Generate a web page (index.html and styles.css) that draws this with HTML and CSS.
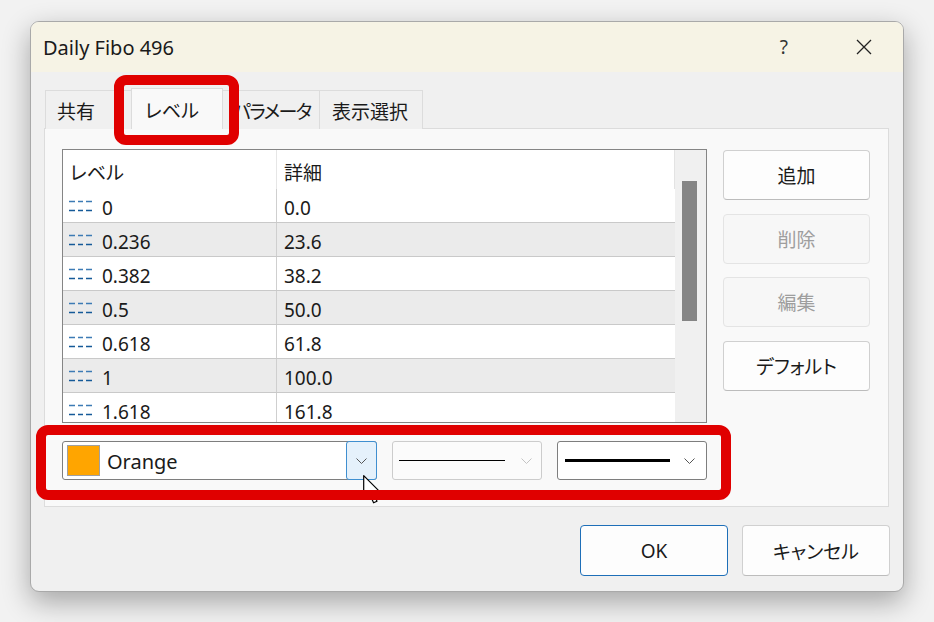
FILE: index.html
```html
<!DOCTYPE html>
<html lang="ja">
<head>
  <meta charset="UTF-8">
  <title>Daily Fibo 496</title>
  <link rel="stylesheet" href="styles.css">
</head>
<body>
  <div class="window">
    <div class="titlebar">
      <span class="title">Daily Fibo 496</span>
      <span class="help">?</span>
      <svg class="close" width="16" height="16" viewBox="0 0 16 16">
        <path d="M1 1 L15 15 M15 1 L1 15" stroke="#222" stroke-width="1.3" fill="none"/>
      </svg>
    </div>

    <div class="content">
      <div class="tabs">
        <div class="tab">共有</div>
        <div class="tab active">レベル</div>
        <div class="tab tight">パラメータ</div>
        <div class="tab">表示選択</div>
      </div>

      <div class="panel">
        <div class="panel-top">
          <div class="levels">
            <div class="grid">
              <div class="row head">
                <div class="cell c1">レベル</div>
                <div class="cell c2">詳細</div>
              </div>
              <div class="row">
                <div class="cell c1"><svg class="lvl" width="23" height="12"><use href="#dash"/></svg>0</div>
                <div class="cell c2">0.0</div>
              </div>
              <div class="row alt">
                <div class="cell c1"><svg class="lvl" width="23" height="12"><use href="#dash"/></svg>0.236</div>
                <div class="cell c2">23.6</div>
              </div>
              <div class="row">
                <div class="cell c1"><svg class="lvl" width="23" height="12"><use href="#dash"/></svg>0.382</div>
                <div class="cell c2">38.2</div>
              </div>
              <div class="row alt">
                <div class="cell c1"><svg class="lvl" width="23" height="12"><use href="#dash"/></svg>0.5</div>
                <div class="cell c2">50.0</div>
              </div>
              <div class="row">
                <div class="cell c1"><svg class="lvl" width="23" height="12"><use href="#dash"/></svg>0.618</div>
                <div class="cell c2">61.8</div>
              </div>
              <div class="row alt">
                <div class="cell c1"><svg class="lvl" width="23" height="12"><use href="#dash"/></svg>1</div>
                <div class="cell c2">100.0</div>
              </div>
              <div class="row">
                <div class="cell c1"><svg class="lvl" width="23" height="12"><use href="#dash"/></svg>1.618</div>
                <div class="cell c2">161.8</div>
              </div>
            </div>
            <div class="scrollbar"><div class="thumb"></div></div>
          </div>

          <div class="side-btns">
            <button class="btn">追加</button>
            <button class="btn" disabled>削除</button>
            <button class="btn" disabled>編集</button>
            <button class="btn">デフォルト</button>
          </div>
        </div>

        <div class="combos">
          <div class="combo color-combo">
            <span class="swatch"></span>
            <span class="combo-text">Orange</span>
            <span class="drop hover">
              <svg width="11" height="6" viewBox="0 0 11 6"><path d="M0.5 0.5 L5.5 5.5 L10.5 0.5" stroke="#555" fill="none"/></svg>
            </span>
          </div>
          <div class="combo style-combo disabled">
            <span class="line thin"></span>
            <span class="drop">
              <svg width="11" height="6" viewBox="0 0 11 6"><path d="M0.5 0.5 L5.5 5.5 L10.5 0.5" stroke="#c4c4c4" fill="none"/></svg>
            </span>
          </div>
          <div class="combo width-combo">
            <span class="line thick"></span>
            <span class="drop">
              <svg width="11" height="6" viewBox="0 0 11 6"><path d="M0.5 0.5 L5.5 5.5 L10.5 0.5" stroke="#555" fill="none"/></svg>
            </span>
          </div>
        </div>
      </div>

      <div class="footer">
        <button class="btn default">OK</button>
        <button class="btn">キャンセル</button>
      </div>
    </div>

    <!-- mouse pointer over the colour drop-down -->
    <svg class="cursor" width="19" height="30" viewBox="0 0 19 30">
      <path d="M0.7 0.7 L0.7 24 L6.3 18.6 L10.6 27.8 L14 26.2 L9.8 17.2 L17.2 17.2 Z" fill="#fff" stroke="#000" stroke-width="1.2" stroke-linejoin="round"/>
    </svg>

    <!-- annotation marks -->
    <div class="mark mark-tab"></div>
    <div class="mark mark-combo"></div>
  </div>

  <svg width="0" height="0" style="position:absolute">
    <defs>
      <g id="dash">
        <path d="M0 1.5 H6 M9 1.5 H14 M17 1.5 H23" stroke="#3d7bb5" stroke-width="1.3"/>
        <path d="M0 10.5 H6 M9 10.5 H14 M17 10.5 H23" stroke="#155a98" stroke-width="1.6"/>
      </g>
    </defs>
  </svg>
</body>
</html>
```

FILE: styles.css
```css
* {
  margin: 0;
  padding: 0;
  box-sizing: border-box;
}

body {
  font-family: "Noto Sans", "Noto Sans CJK JP", sans-serif;
  font-feature-settings: "palt";
  background-color: #f2f2f2;
  color: #1a1a1a;
  width: 934px;
  height: 622px;
  overflow: hidden;
}

/* Window */
.window {
  position: relative;
  margin: 21px 0 0 30px;
  width: 874px;
  height: 571px;
  border: 1px solid #a9a9a9;
  border-radius: 9px;
  background: #f0f0f0;
  box-shadow: 0 10px 28px rgba(0, 0, 0, 0.32);
  overflow: hidden;
}

.titlebar {
  height: 50px;
  background: #f6f3e5;
  display: flex;
  align-items: center;
  padding: 0 31px 0 12px;
}

.title {
  font-size: 20px;
  flex: 1;
}

.help {
  font-size: 19px;
  color: #333;
  margin-right: 68px;
}

.close {
  display: block;
}

/* Content */
.content {
  padding: 17px 14px 0 13px;
}

.tabs {
  display: flex;
  align-items: flex-end;
  height: 40px;
  padding-left: 1px;
  position: relative;
  z-index: 1;
  margin-bottom: -1px;
}

.tab {
  height: 39px;
  border: 1px solid #dcdcdc;
  border-bottom: none;
  background: #f0f0f0;
  font-size: 19px;
  white-space: nowrap;
  padding: 6px 0 0 11px;
  margin-right: -1px;
}

.tab:nth-child(1) { width: 87px; }
.tab:nth-child(2) { width: 92px; }
.tab:nth-child(3) { width: 98px; padding-left: 10px; }
.tab:nth-child(4) { width: 104px; padding-left: 12px; }

.tab.tight {
  letter-spacing: -1.6px;
}

.tab.active {
  height: 41px;
  background: #f9f9f9;
  padding-left: 13px;
  padding-top: 7px;
}

.panel {
  border: 1px solid #dcdcdc;
  background: #f9f9f9;
  padding: 20px 17px 26px 17px;
}

.panel-top {
  display: flex;
  gap: 16px;
}

/* Level list */
.levels {
  width: 645px;
  height: 274px;
  border: 1px solid #858585;
  background: #fff;
  display: flex;
}

.grid {
  flex: 1;
  overflow: hidden;
}

.row {
  display: flex;
  height: 34px;
  border-bottom: 1px solid #c9c9c9;
  font-size: 19px;
}

.row.head {
  height: 39px;
  border-bottom: none;
  border-right: 1px solid #e3e3e3;
}

.row.alt {
  background: #ebebeb;
}

.cell {
  display: flex;
  align-items: center;
  padding-top: 5px;
}

.c1 {
  width: 214px;
  border-right: 1px solid #cfcfcf;
  padding-left: 6px;
}

.head .c1 {
  padding-left: 7px;
  border-right-color: #e6e6e6;
}

.c2 {
  flex: 1;
  padding-left: 7px;
}

.lvl {
  margin-right: 10px;
  margin-top: -5px;
  flex-shrink: 0;
}

.scrollbar {
  width: 31px;
  background: #f0f0f0;
  padding: 31px 0 0 7px;
}

.thumb {
  width: 15px;
  height: 140px;
  background: #858585;
}

/* Side buttons */
.side-btns {
  display: flex;
  flex-direction: column;
  gap: 13.7px;
  padding-top: 1px;
}

.btn {
  width: 147px;
  height: 50px;
  font-family: inherit;
  font-feature-settings: "palt";
  font-size: 19px;
  color: #1a1a1a;
  background: #fdfdfd;
  border: 1px solid #d0d0d0;
  border-bottom-color: #bcbcbc;
  border-radius: 4px;
}

.btn:disabled {
  background: #f7f7f7;
  border-color: #e4e4e4;
  color: #9e9e9e;
}

/* Combos */
.combos {
  display: flex;
  gap: 15px;
  margin-top: 18px;
  height: 39px;
}

.combo {
  position: relative;
  display: flex;
  align-items: center;
  background: #fff;
  border: 1px solid #7e7e7e;
  border-radius: 3px;
  height: 39px;
}

.color-combo {
  width: 315px;
  padding-left: 4px;
}

.style-combo,
.width-combo {
  width: 150px;
  padding-left: 6px;
}

.style-combo.disabled {
  border-color: #cccccc;
  background: #fbfbfb;
}

.swatch {
  width: 33px;
  height: 31px;
  background: #ffa500;
  border: 1px solid #a0a0a0;
}

.combo-text {
  font-size: 20px;
  margin-left: 7px;
  flex: 1;
  padding-top: 1px;
}

.drop {
  width: 31px;
  height: 39px;
  margin: -1px -1px -1px auto;
  display: flex;
  align-items: center;
  justify-content: center;
}

.drop.hover {
  background: #e5f1fb;
  border: 1px solid #3f8fd0;
  border-radius: 3px;
}

.line {
  display: block;
  width: 106px;
  background: #000;
}

.line.thin {
  height: 1px;
}

.line.thick {
  height: 3px;
  margin-left: 1px;
  width: 105px;
}

.width-combo .drop {
  margin-right: 1px;
}

/* Footer */
.footer {
  display: flex;
  justify-content: flex-end;
  gap: 14px;
  padding-top: 18px;
  margin-right: -1px;
}

.footer .btn {
  width: 148px;
  height: 51px;
}

.footer .btn.default {
  border: 1px solid #1e6fb8;
}

/* Overlays */
.cursor {
  position: absolute;
  left: 332px;
  top: 453px;
  z-index: 2;
}

.mark {
  position: absolute;
  border: 10px solid #e00000;
  border-radius: 12px;
  z-index: 3;
}

.mark-tab {
  left: 83px;
  top: 53px;
  width: 125px;
  height: 70px;
}

.mark-combo {
  left: 5px;
  top: 403px;
  width: 695px;
  height: 75px;
}
```
